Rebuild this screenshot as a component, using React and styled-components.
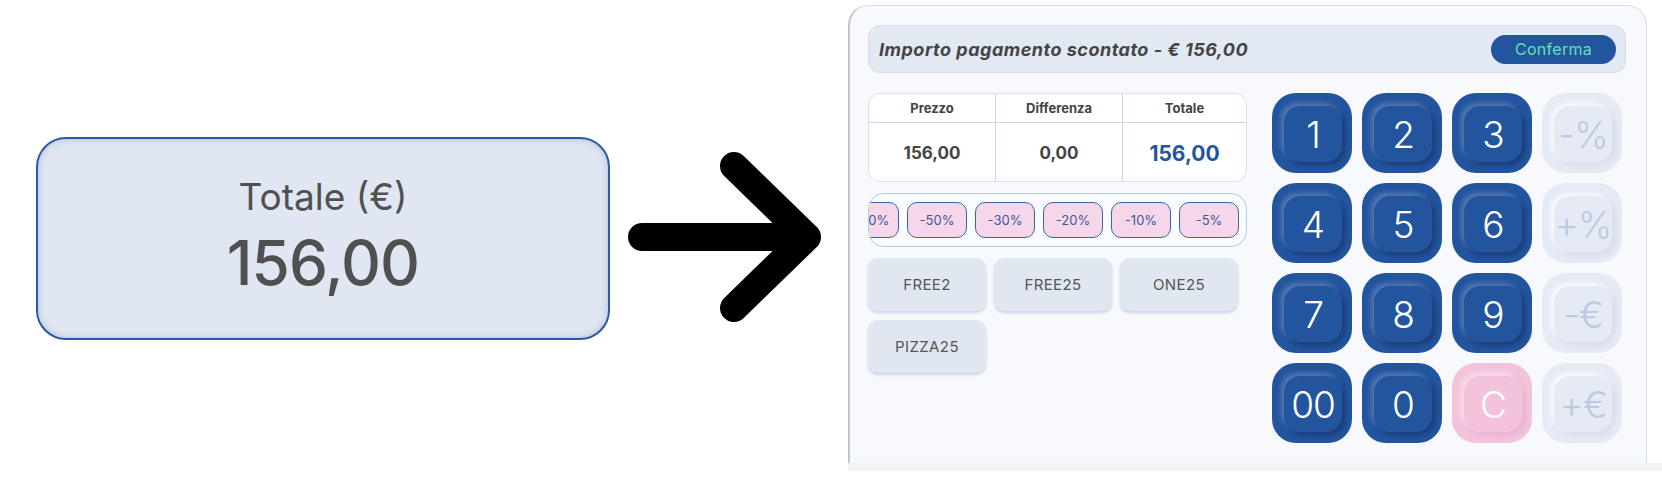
import styled, { createGlobalStyle } from "styled-components";

const GlobalStyle = createGlobalStyle`
  html, body {
    margin: 0;
    padding: 0;
    background: #ffffff;
    font-family: "Inter", "Noto Sans", sans-serif;
  }
  #root {
    width: 1662px;
    height: 478px;
    overflow: hidden;
  }
`;

const chips = ["-100%", "-50%", "-30%", "-20%", "-10%", "-5%"];
const coupons = ["FREE2", "FREE25", "ONE25", "PIZZA25"];
const keys = [
  { label: "1", kind: "num" },
  { label: "2", kind: "num" },
  { label: "3", kind: "num" },
  { label: "-%", kind: "off" },
  { label: "4", kind: "num" },
  { label: "5", kind: "num" },
  { label: "6", kind: "num" },
  { label: "+%", kind: "off" },
  { label: "7", kind: "num" },
  { label: "8", kind: "num" },
  { label: "9", kind: "num" },
  { label: "-€", kind: "off" },
  { label: "00", kind: "num" },
  { label: "0", kind: "num" },
  { label: "C", kind: "clear" },
  { label: "+€", kind: "off" },
];

const keyColors = {
  num: { bg: "#23559f", fg: "#ffffff", light: "rgba(255,255,255,0.22)", dark: "rgba(0,10,40,0.35)" },
  clear: { bg: "#f3c3dc", fg: "#ffffff", light: "rgba(255,255,255,0.45)", dark: "rgba(180,90,140,0.18)" },
  off: { bg: "#e6eaf4", fg: "#bccbe3", light: "rgba(255,255,255,0.8)", dark: "rgba(150,165,200,0.2)" },
};

export default function App() {
  return (
    <>
      <GlobalStyle />
      <Page>
        <TotalCard>
          <TotalLabel>Totale (€)</TotalLabel>
          <TotalValue>156,00</TotalValue>
        </TotalCard>
        <Arrow width="220" height="190" viewBox="0 0 220 190">
          <path
            d="M18 102 H183 M110 31 L183 102 L110 173"
            fill="none"
            stroke="#000"
            strokeWidth="28"
            strokeLinecap="round"
            strokeLinejoin="round"
          />
        </Arrow>
        <PanelWrap>
          <Panel>
            <HeaderBar>
              <HeaderTitle>Importo pagamento scontato - € 156,00</HeaderTitle>
              <ConfirmButton>Conferma</ConfirmButton>
            </HeaderBar>
            <Body>
              <LeftCol>
                <Table>
                  <Cell $head>Prezzo</Cell>
                  <Cell $head>Differenza</Cell>
                  <Cell $head>Totale</Cell>
                  <Cell>156,00</Cell>
                  <Cell>0,00</Cell>
                  <Cell $accent>156,00</Cell>
                </Table>
                <ChipStrip>
                  {chips.map((c) => (
                    <Chip key={c}>{c}</Chip>
                  ))}
                </ChipStrip>
                <CouponGrid>
                  {coupons.map((c) => (
                    <Coupon key={c}>{c}</Coupon>
                  ))}
                </CouponGrid>
              </LeftCol>
              <Keypad>
                {keys.map((k) => (
                  <Key key={k.label} $kind={k.kind}>
                    <KeyFace $kind={k.kind}>{k.label}</KeyFace>
                  </Key>
                ))}
              </Keypad>
            </Body>
          </Panel>
          <BottomStrip />
        </PanelWrap>
      </Page>
    </>
  );
}

const Page = styled.div`
  display: flex;
  align-items: flex-start;
  padding: 5px 0 0 36px;
  box-sizing: border-box;
  width: 1662px;
  height: 478px;
`;

const TotalCard = styled.div`
  margin-top: 132px;
  width: 574px;
  height: 203px;
  box-sizing: border-box;
  border: 2px solid #2a5aa5;
  border-radius: 30px;
  background: #e0e7f2;
  box-shadow: inset 0 0 7px rgba(40, 80, 150, 0.28);
  display: flex;
  flex-direction: column;
  align-items: center;
  justify-content: center;
  color: #505050;
`;

const TotalLabel = styled.div`
  font-size: 37px;
  font-weight: 400;
  line-height: 42px;
  margin-top: -4px;
`;

const TotalValue = styled.div`
  font-size: 62px;
  font-weight: 500;
  line-height: 70px;
  margin-top: 10px;
  letter-spacing: -1px;
`;

const Arrow = styled.svg`
  margin-top: 130px;
  margin-left: 14px;
  flex-shrink: 0;
`;

const PanelWrap = styled.div`
  margin-left: 4px;
  display: flex;
  flex-direction: column;
`;

const Panel = styled.div`
  width: 799px;
  height: 458px;
  box-sizing: border-box;
  background: #f7f9fd;
  border: 1px solid #d6dcea;
  border-left: 2px solid #c3c6cf;
  border-bottom: none;
  border-radius: 20px 20px 0 0;
  padding: 19px 19px 0 18px;
  display: flex;
  flex-direction: column;
  gap: 20px;
`;

const BottomStrip = styled.div`
  height: 8px;
  width: 814px;
  background: #f8f1f7;
`;

const HeaderBar = styled.div`
  height: 48px;
  box-sizing: border-box;
  margin-right: 1px;
  border: 1px solid #d5ddea;
  border-radius: 12px;
  background: #e3e9f2;
  display: flex;
  align-items: center;
  justify-content: space-between;
  padding: 0 9px 0 10px;
`;

const HeaderTitle = styled.div`
  font-size: 18px;
  font-weight: 700;
  font-style: italic;
  letter-spacing: 0.5px;
  color: #444444;
`;

const ConfirmButton = styled.button`
  width: 125px;
  height: 29px;
  border: none;
  border-radius: 15px;
  background: #23559f;
  color: #5fe0b5;
  font-family: inherit;
  font-size: 16px;
  font-weight: 400;
  letter-spacing: 0.3px;
  padding: 0;
`;

const Body = styled.div`
  display: flex;
  gap: 25px;
`;

const LeftCol = styled.div`
  width: 379px;
  display: flex;
  flex-direction: column;
  gap: 11px;
`;

const Table = styled.div`
  display: grid;
  grid-template-columns: 126px 127px 1fr;
  grid-template-rows: 29px 60px;
  background: #ffffff;
  border: 1px solid #d8e1f0;
  border-radius: 12px;
  overflow: hidden;
  box-sizing: border-box;
  height: 89px;
`;

const Cell = styled.div`
  display: flex;
  align-items: center;
  justify-content: center;
  color: ${(p) => (p.$accent ? "#23559f" : "#444444")};
  font-weight: 700;
  font-size: ${(p) => (p.$head ? "13px" : p.$accent ? "21px" : "17px")};
  border-bottom: ${(p) => (p.$head ? "1px solid #c9d5ea" : "none")};
  &:not(:nth-child(3n + 1)) {
    border-left: 1px solid #c9d5ea;
  }
`;

const ChipStrip = styled.div`
  height: 54px;
  box-sizing: border-box;
  border: 1px solid #b8c9e6;
  border-radius: 16px;
  background: #f9fbfe;
  display: flex;
  align-items: center;
  justify-content: flex-end;
  gap: 8px;
  padding-right: 7px;
  overflow: hidden;
`;

const Chip = styled.div`
  flex-shrink: 0;
  width: 60px;
  height: 36px;
  box-sizing: border-box;
  border: 1px solid #3a66a8;
  border-radius: 10px;
  background: #f6d6e9;
  color: #3b5a9c;
  font-size: 13px;
  display: flex;
  align-items: center;
  justify-content: center;
`;

const CouponGrid = styled.div`
  display: grid;
  grid-template-columns: repeat(3, 118px);
  grid-auto-rows: 53px;
  column-gap: 8px;
  row-gap: 9px;
`;

const Coupon = styled.div`
  border-radius: 10px;
  background: #e1e7f1;
  box-shadow: 0 2px 3px rgba(110, 140, 190, 0.35);
  color: #555555;
  font-size: 15px;
  letter-spacing: 0.4px;
  display: flex;
  align-items: center;
  justify-content: center;
`;

const Keypad = styled.div`
  display: grid;
  grid-template-columns: repeat(4, 80px);
  grid-auto-rows: 80px;
  gap: 10px;
`;

const Key = styled.div`
  border-radius: 24px;
  background: ${(p) => keyColors[p.$kind].bg};
  display: flex;
  padding: 13px 10px 11px 12px;
  box-sizing: border-box;
`;

const KeyFace = styled.div`
  flex: 1;
  border-radius: 16px;
  background: ${(p) => keyColors[p.$kind].bg};
  box-shadow: -3px -3px 5px ${(p) => keyColors[p.$kind].light},
    3px 3px 6px ${(p) => keyColors[p.$kind].dark};
  color: ${(p) => keyColors[p.$kind].fg};
  font-size: 37px;
  font-weight: 300;
  letter-spacing: -1px;
  display: flex;
  align-items: center;
  justify-content: center;
  white-space: nowrap;
`;
